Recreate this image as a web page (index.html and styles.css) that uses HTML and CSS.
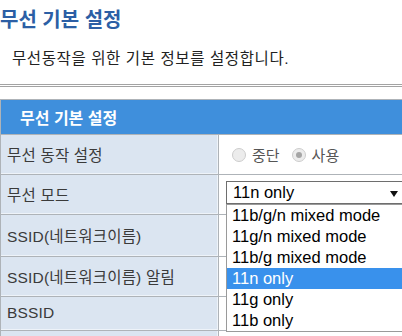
FILE: index.html
```html
<!DOCTYPE html>
<html lang="ko">
<head>
<meta charset="utf-8">
<link rel="stylesheet" href="styles.css">
</head>
<body>
<h1 class="title">무선 기본 설정</h1>
<p class="desc">무선동작을 위한 기본 정보를 설정합니다.</p>
<div class="rule"></div>
<table class="form">
  <colgroup><col class="c1"><col class="c2"></colgroup>
  <tr class="rh"><th colspan="2" class="head">무선 기본 설정</th></tr>
  <tr class="r1">
    <td class="lbl">무선 동작 설정</td>
    <td class="val"><span class="radios"><span class="radio"></span><span class="rtext">중단</span><span class="radio on"></span><span class="rtext">사용</span></span></td>
  </tr>
  <tr class="r2">
    <td class="lbl">무선 모드</td>
    <td class="val top">
      <div class="select">
        <span class="cur">11n only</span><span class="arrow"></span>
        <ul class="list">
          <li>11b/g/n mixed mode</li>
          <li>11g/n mixed mode</li>
          <li>11b/g mixed mode</li>
          <li class="sel">11n only</li>
          <li>11g only</li>
          <li>11b only</li>
        </ul>
      </div>
    </td>
  </tr>
  <tr class="r3"><td class="lbl">SSID(네트워크이름)</td><td class="val"></td></tr>
  <tr class="r4"><td class="lbl">SSID(네트워크이름) 알림</td><td class="val"></td></tr>
  <tr class="r5"><td class="lbl">BSSID</td><td class="val"></td></tr>
  <tr class="r6"><td class="lbl"></td><td class="val"></td></tr>
</table>
</body>
</html>
```

FILE: styles.css
```css
html, body {
  margin: 0;
  padding: 0;
  overflow: hidden;
  background: #fff;
}
body {
  font-family: "Liberation Sans", "Noto Sans CJK KR", sans-serif;
  color: #333;
}
.title {
  margin: 0;
  padding-top: 7px;
  font-size: 20px;
  line-height: 26px;
  font-weight: bold;
  color: #2c5fa5;
  white-space: nowrap;
}
.desc {
  margin: 16px 0 0;
  padding-left: 12px;
  font-size: 15.5px;
  letter-spacing: 0.6px;
  line-height: 20px;
  color: #222;
  white-space: nowrap;
}
.rule {
  margin-top: 15px;
  height: 1px;
  border-top: 1px solid #a3a3a3;
  border-bottom: 1px solid #a3a3a3;
}
.form {
  margin-top: 12px;
  width: 440px;
  table-layout: fixed;
  border-collapse: separate;
  border-spacing: 1px;
  background: #aeb3b8;
}
.c1 { width: 217px; }
.head {
  height: 34px;
  padding: 0 0 0 19px;
  background: #3f8fdc;
  color: #fff;
  font-size: 16px;
  font-weight: bold;
  text-align: left;
}
.lbl {
  padding: 0 0 0 6px;
  background: #dbe5f1;
  border-right: 1px solid #eef3f9;
  border-bottom: 1px solid #eef3f9;
  font-size: 15.5px;
  letter-spacing: 0.2px;
  color: #3a3a3a;
  white-space: nowrap;
  vertical-align: middle;
}
.val {
  padding: 0 0 0 7px;
  background: #fff;
  vertical-align: middle;
}
.val.top {
  vertical-align: top;
  padding-top: 6px;
}
.r1 { height: 39px; }
.r2 { height: 39px; }
.r3 { height: 41px; }
.r4 { height: 39px; }
.r5 { height: 33px; }
.r6 { height: 33px; }
.radios {
  display: flex;
  align-items: center;
  padding-left: 6px;
  font-size: 15px;
  color: #555;
}
.radio {
  position: relative;
  width: 12px;
  height: 12px;
  border: 1px solid #cdcdcd;
  border-radius: 50%;
  background: #ececec;
  margin-right: 6px;
}
.radio.on::after {
  content: "";
  position: absolute;
  left: 3px;
  top: 3px;
  width: 6px;
  height: 6px;
  border-radius: 50%;
  background: #a5a5a5;
}
.rtext { margin-right: 12px; }
.select {
  position: relative;
  width: 178px;
  height: 21px;
  border: 1px solid #6e6e6e;
  font-family: "Liberation Sans", Arial, sans-serif;
  font-size: 16.5px;
  line-height: 21px;
  color: #000;
}
.cur { padding-left: 6px; }
.arrow {
  position: absolute;
  right: 7px;
  top: 9px;
  border-left: 4px solid transparent;
  border-right: 4px solid transparent;
  border-top: 6px solid #111;
}
.list {
  position: absolute;
  left: -1px;
  top: 22px;
  width: 178px;
  margin: 0;
  padding: 0;
  list-style: none;
  background: #fff;
  border: 1px solid #9a9a9a;
}
.list li {
  height: 21px;
  line-height: 21px;
  padding-left: 5px;
  white-space: nowrap;
}
.list li.sel {
  background: #3991ec;
  color: #fff;
}
```
